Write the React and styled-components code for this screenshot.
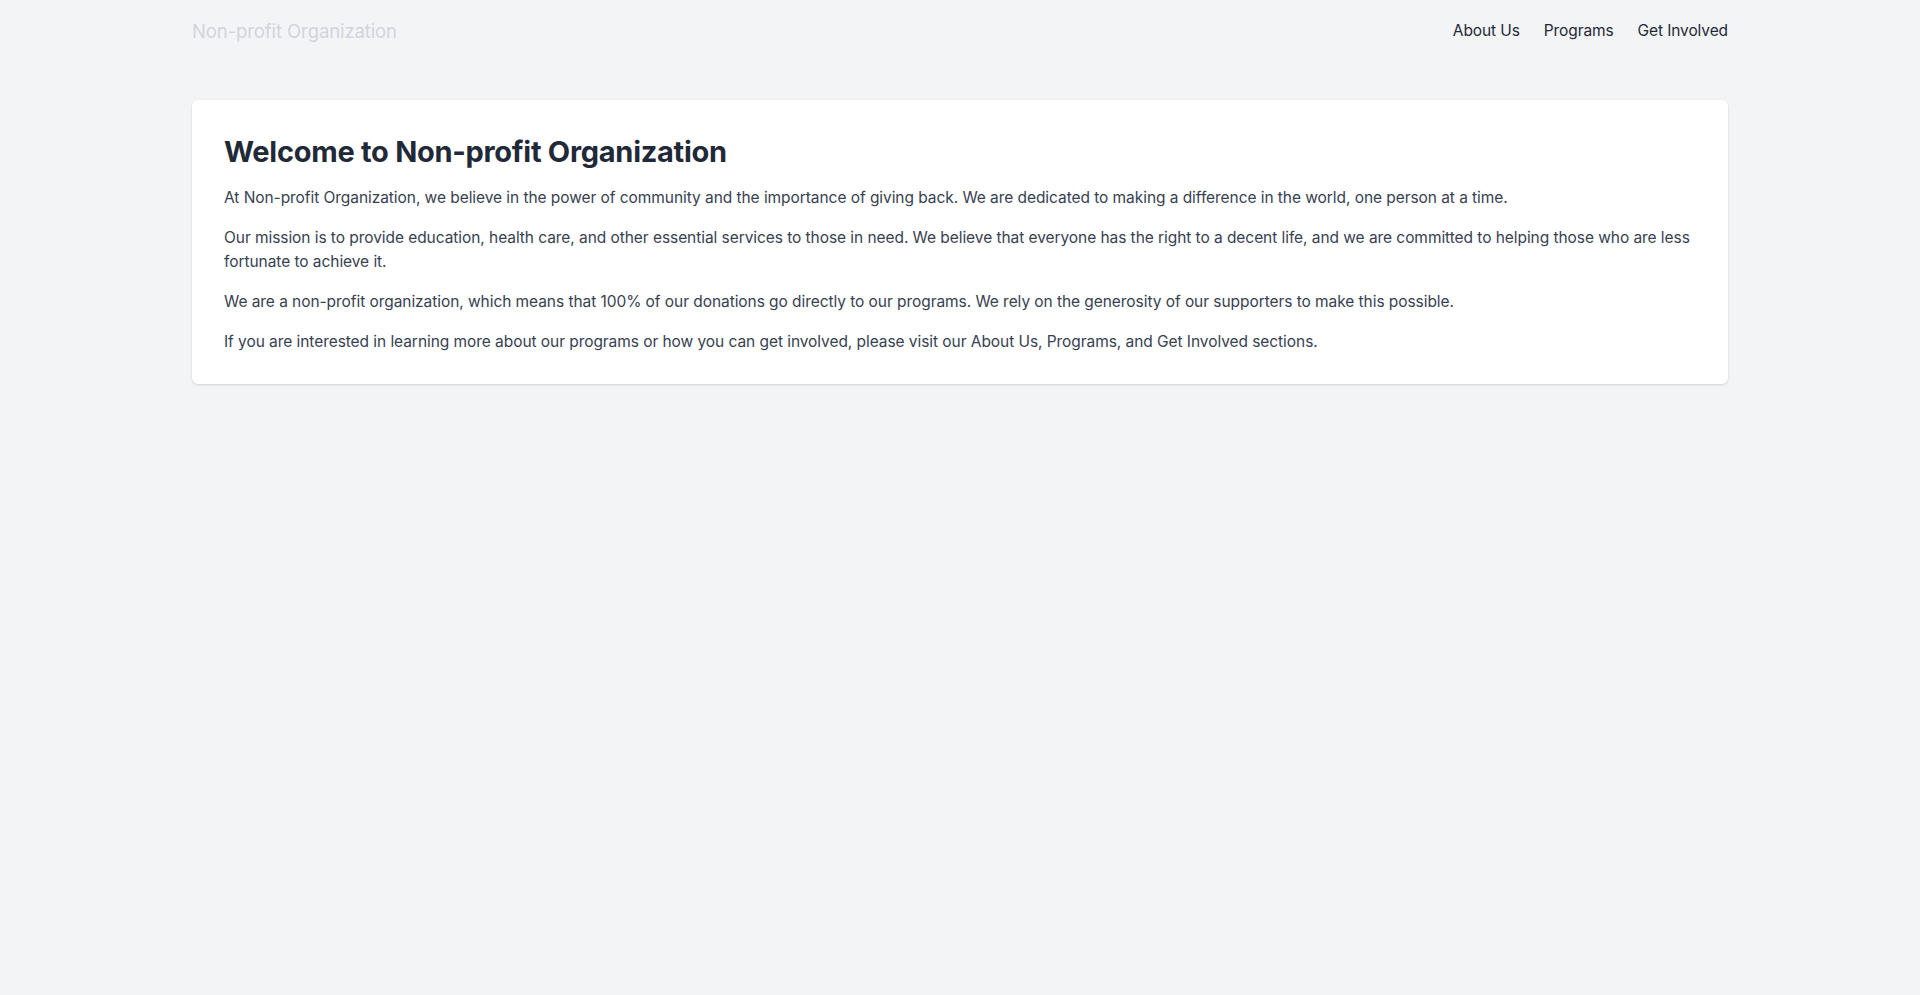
import React from "react";
import styled, { createGlobalStyle } from "styled-components";

const GlobalStyle = createGlobalStyle`
  html, body {
    margin: 0;
    padding: 0;
    background: #f3f4f6;
    font-family: Inter, "Noto Sans", "Liberation Sans", sans-serif;
    -webkit-font-smoothing: antialiased;
  }
  * { box-sizing: border-box; }
`;

const Page = styled.div`
  min-height: 100vh;
  background: #f3f4f6;
`;

const Container = styled.div`
  max-width: 1536px;
  margin: 0 auto;
`;

const Header = styled.header`
  display: flex;
  align-items: center;
  justify-content: space-between;
  padding: 17px 0 15px;
`;

const Logo = styled.a`
  font-size: 18.5px;
  line-height: 28px;
  color: #d1d5db;
  text-decoration: none;
  letter-spacing: -0.1px;
`;

const Nav = styled.nav`
  display: flex;
  gap: 24px;
`;

const NavLink = styled.a`
  font-size: 15.5px;
  line-height: 24px;
  color: #1f2937;
  text-decoration: none;
  letter-spacing: -0.1px;
`;

const Main = styled.main`
  padding-top: 40px;
`;

const Card = styled.section`
  background: #ffffff;
  border-radius: 6px;
  box-shadow: 0 1px 3px rgba(0, 0, 0, 0.1), 0 1px 2px rgba(0, 0, 0, 0.06);
  padding: 34px 32px 30px;
`;

const Title = styled.h1`
  margin: 0 0 16px;
  font-size: 29px;
  line-height: 36px;
  font-weight: 700;
  color: #1f2937;
  letter-spacing: -0.28px;
`;

const Body = styled.div`
  display: flex;
  flex-direction: column;
  gap: 16px;
`;

const Para = styled.p`
  margin: 0;
  font-size: 15.5px;
  line-height: 24px;
  color: #374151;
  letter-spacing: -0.06px;
`;

export default function App() {
  return (
    <Page>
      <GlobalStyle />
      <Container>
        <Header>
          <Logo href="#">Non-profit Organization</Logo>
          <Nav>
            <NavLink href="#">About Us</NavLink>
            <NavLink href="#">Programs</NavLink>
            <NavLink href="#">Get Involved</NavLink>
          </Nav>
        </Header>
        <Main>
          <Card>
            <Title>Welcome to Non-profit Organization</Title>
            <Body>
              <Para>
                At Non-profit Organization, we believe in the power of community and the importance of giving back. We are dedicated to making a difference in the world, one person at a time.
              </Para>
              <Para>
                Our mission is to provide education, health care, and other essential services to those in need. We believe that everyone has the right to a decent life, and we are committed to helping those who are less fortunate to achieve it.
              </Para>
              <Para>
                We are a non-profit organization, which means that 100% of our donations go directly to our programs. We rely on the generosity of our supporters to make this possible.
              </Para>
              <Para>
                If you are interested in learning more about our programs or how you can get involved, please visit our About Us, Programs, and Get Involved sections.
              </Para>
            </Body>
          </Card>
        </Main>
      </Container>
    </Page>
  );
}
